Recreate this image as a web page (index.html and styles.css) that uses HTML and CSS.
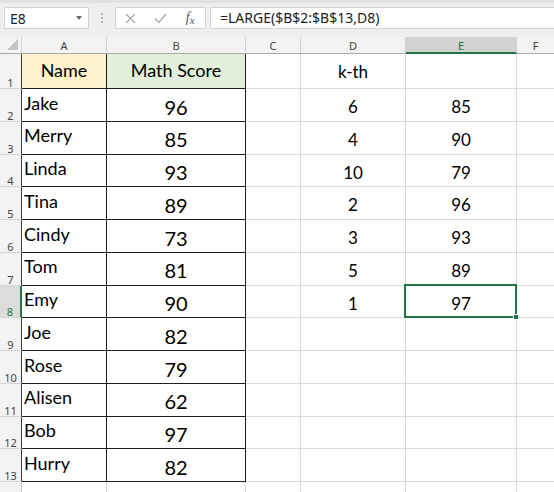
FILE: index.html
```html
<!DOCTYPE html>
<html>
<head>
<meta charset="utf-8">
<link rel="stylesheet" href="styles.css">
</head>
<body>
<div class="bar">
  <div class="namebox"><span>E8</span><span class="caret"></span></div>
  <div class="dots"><i></i><i></i><i></i></div>
  <div class="fxbox">
    <span class="btn"><svg width="11" height="11" viewBox="0 0 11 11"><path d="M1 1L10 10M10 1L1 10" stroke="#a9a9a9" stroke-width="1.3" fill="none"/></svg></span>
    <span class="btn"><svg width="13" height="11" viewBox="0 0 13 11"><path d="M1 5.5L4.8 9.5L12 1" stroke="#a9a9a9" stroke-width="1.4" fill="none"/></svg></span>
    <span class="btn fx">f<span class="x">x</span></span>
  </div>
  <div class="formula">=LARGE($B$2:$B$13,D8)</div>
</div>
<div class="sheet">
  <div class="c corner"><svg width="12" height="12" viewBox="0 0 12 12"><path d="M11 0V11H0Z" fill="#c3c3c3"/></svg></div>
  <div class="c ch">A</div><div class="c ch">B</div><div class="c ch">C</div><div class="c ch">D</div><div class="c ch sel">E</div><div class="c ch">F</div>

  <div class="c rh tb">1</div><div class="c t hd yel">Name</div><div class="c t hd grn">Math Score</div><div class="c"></div><div class="c kv">k-th</div><div class="c"></div><div class="c"></div>

  <div class="c rh tb">2</div><div class="c t nm">Jake</div><div class="c t sc">96</div><div class="c"></div><div class="c kv">6</div><div class="c kv">85</div><div class="c"></div>
  <div class="c rh tb">3</div><div class="c t nm">Merry</div><div class="c t sc">85</div><div class="c"></div><div class="c kv">4</div><div class="c kv">90</div><div class="c"></div>
  <div class="c rh tb">4</div><div class="c t nm">Linda</div><div class="c t sc">93</div><div class="c"></div><div class="c kv">10</div><div class="c kv">79</div><div class="c"></div>
  <div class="c rh tb">5</div><div class="c t nm">Tina</div><div class="c t sc">89</div><div class="c"></div><div class="c kv">2</div><div class="c kv">96</div><div class="c"></div>
  <div class="c rh tb">6</div><div class="c t nm">Cindy</div><div class="c t sc">73</div><div class="c"></div><div class="c kv">3</div><div class="c kv">93</div><div class="c"></div>
  <div class="c rh tb">7</div><div class="c t nm">Tom</div><div class="c t sc">81</div><div class="c"></div><div class="c kv">5</div><div class="c kv">89</div><div class="c"></div>
  <div class="c rh tb rsel">8</div><div class="c t nm">Emy</div><div class="c t sc">90</div><div class="c"></div><div class="c kv">1</div><div class="c kv active">97</div><div class="c"></div>
  <div class="c rh tb">9</div><div class="c t nm">Joe</div><div class="c t sc">82</div><div class="c"></div><div class="c"></div><div class="c"></div><div class="c"></div>
  <div class="c rh tb">10</div><div class="c t nm">Rose</div><div class="c t sc">79</div><div class="c"></div><div class="c"></div><div class="c"></div><div class="c"></div>
  <div class="c rh tb">11</div><div class="c t nm">Alisen</div><div class="c t sc">62</div><div class="c"></div><div class="c"></div><div class="c"></div><div class="c"></div>
  <div class="c rh tb">12</div><div class="c t nm">Bob</div><div class="c t sc">97</div><div class="c"></div><div class="c"></div><div class="c"></div><div class="c"></div>
  <div class="c rh tb">13</div><div class="c t nm">Hurry</div><div class="c t sc">82</div><div class="c"></div><div class="c"></div><div class="c"></div><div class="c"></div>
  <div class="c rh"></div><div class="c"></div><div class="c"></div><div class="c"></div><div class="c"></div><div class="c"></div><div class="c"></div>
</div>
</body>
</html>
```
FILE: styles.css
```css
html, body {
  margin: 0;
  padding: 0;
  background: #fff;
}
body {
  width: 554px;
  height: 492px;
  overflow: hidden;
  font-family: Lato, "Open Sans", sans-serif;
}
.bar {
  height: 37px;
  box-sizing: border-box;
  background: #efefef;
  border-top: 3px solid #e2e2e2;
  padding-top: 4px;
  display: flex;
  align-items: flex-start;
}
.namebox {
  margin-left: 4px;
  width: 85px;
  height: 22px;
  box-sizing: border-box;
  background: #fff;
  border: 1px solid #d4d4d4;
  display: flex;
  align-items: center;
  justify-content: space-between;
  padding: 0 6px 0 5px;
  font: 14px "Noto Sans", sans-serif;
  color: #222;
}
.caret {
  width: 0;
  height: 0;
  border-left: 3.5px solid transparent;
  border-right: 3.5px solid transparent;
  border-top: 4px solid #6a6a6a;
}
.dots {
  width: 26px;
  display: flex;
  flex-direction: column;
  align-items: center;
  gap: 2px;
  padding-top: 6px;
}
.dots i {
  width: 2px;
  height: 2px;
  background: #b3b3b3;
}
.fxbox {
  width: 91px;
  height: 22px;
  box-sizing: border-box;
  background: #fff;
  border: 1px solid #d4d4d4;
  display: flex;
  align-items: center;
}
.btn {
  width: 30px;
  display: flex;
  justify-content: center;
  align-items: center;
}
.fx {
  font: italic 14px "Liberation Serif", serif;
  color: #555;
}
.fx .x {
  font-size: 11px;
  margin-top: 3px;
}
.formula {
  margin-left: 4px;
  flex: 1;
  height: 22px;
  box-sizing: border-box;
  background: #fff;
  border: 1px solid #d4d4d4;
  border-right: none;
  padding-left: 9px;
  font: 14px/20px "Noto Sans", sans-serif;
  color: #222;
}
.sheet {
  display: grid;
  grid-template-columns: 22px 85px 139px 55px 105px 111px 38px;
  grid-template-rows: 17px 35px repeat(12, 32.75px) 20px;
}
.c {
  box-sizing: border-box;
  border-right: 1px solid #dadada;
  border-bottom: 1px solid #dadada;
  line-height: 1;
  white-space: nowrap;
  overflow: hidden;
  color: #000;
}
.corner {
  background: #f3f3f3;
  border-right-color: #d0d0d0;
  border-bottom-color: #ababab;
  display: flex;
  justify-content: flex-end;
  align-items: flex-end;
  padding: 0 2px 2px 0;
}
.ch {
  background: #f3f3f3;
  border-right-color: #d0d0d0;
  border-bottom-color: #ababab;
  font: 11px/1 "Noto Sans", sans-serif;
  color: #444;
  text-align: center;
  padding-top: 3px;
}
.ch.sel {
  background: #d2d2d2;
  border-bottom: 2px solid #217346;
  color: #217346;
}
.rh {
  background: #f3f3f3;
  border-right-color: #c8c8c8;
  border-bottom-color: #d4d4d4;
  font: 11px/1 "Noto Sans", sans-serif;
  color: #444;
  display: flex;
  align-items: flex-end;
  justify-content: center;
}
.rh.tb {
  border-right-color: #3a3a3a;
}
.rh.rsel {
  background: #dcdcdc;
  border-right: 2px solid #217346;
  color: #217346;
}
.t {
  border-right-color: #1e1e1e;
  border-bottom-color: #1e1e1e;
}
.yel { background: #fff2cc; }
.grn { background: #e2efda; }
.hd {
  font-size: 18px;
  text-align: center;
  padding-top: 7px;
}
.nm {
  font-size: 18px;
  padding: 4.5px 0 0 2px;
}
.sc {
  font-size: 20px;
  text-align: center;
  padding-top: 7.5px;
}
.kv {
  font-size: 17px;
  text-align: center;
  padding-top: 9px;
}
.active {
  position: relative;
  overflow: visible;
}
.active::before {
  content: "";
  position: absolute;
  top: -2px;
  left: -2px;
  right: -1px;
  bottom: -1px;
  border: 2px solid #217346;
  z-index: 1;
}
.active::after {
  content: "";
  position: absolute;
  right: -2px;
  bottom: -2px;
  width: 4px;
  height: 4px;
  background: #217346;
  box-shadow: 0 0 0 1px #fff;
  z-index: 2;
}
```
